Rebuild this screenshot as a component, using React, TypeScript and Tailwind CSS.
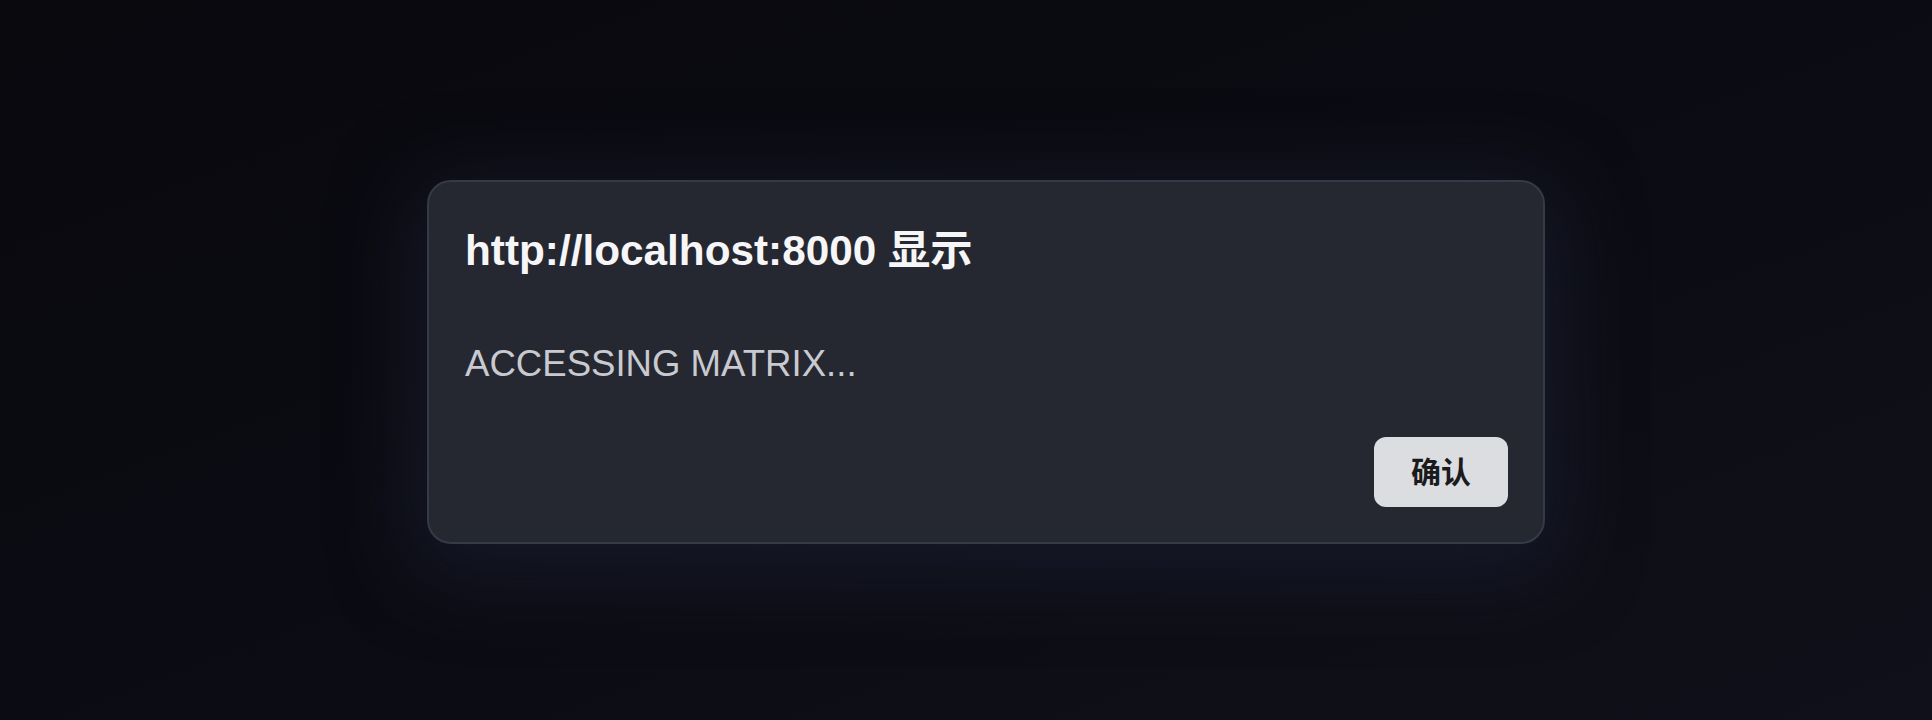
const font = { fontFamily: '"Liberation Sans", "Noto Sans CJK SC", sans-serif' };

const AlertDialog = () => {
  return (
    <div
      className="w-[1118px] rounded-[24px] border-2 border-[#353a47] bg-[#252830] pl-[36px] pr-[35px] pt-[45px] pb-[35px] shadow-[0_16px_80px_12px_rgba(32,34,56,0.6)]"
      style={font}
    >
      <h2 className="text-[42.3px] font-bold leading-[48px] text-[#f6f6f8]">
        http://localhost:8000 显示
      </h2>
      <p className="mt-[67px] text-[36.6px] leading-[44px] text-[#c9cad0]">
        ACCESSING MATRIX...
      </p>
      <div className="mt-[51px] flex justify-end">
        <button className="h-[70px] w-[134px] rounded-[12px] bg-[#dcdde1] text-[30px] font-bold text-[#1b1b1d]">
          确认
        </button>
      </div>
    </div>
  );
};

export default function App() {
  return (
    <div className="h-[720px] w-full overflow-hidden bg-gradient-to-br from-[#09090e] via-[#0b0c13] to-[#0f1019] pl-[427px] pt-[180px]">
      <AlertDialog />
    </div>
  );
}
